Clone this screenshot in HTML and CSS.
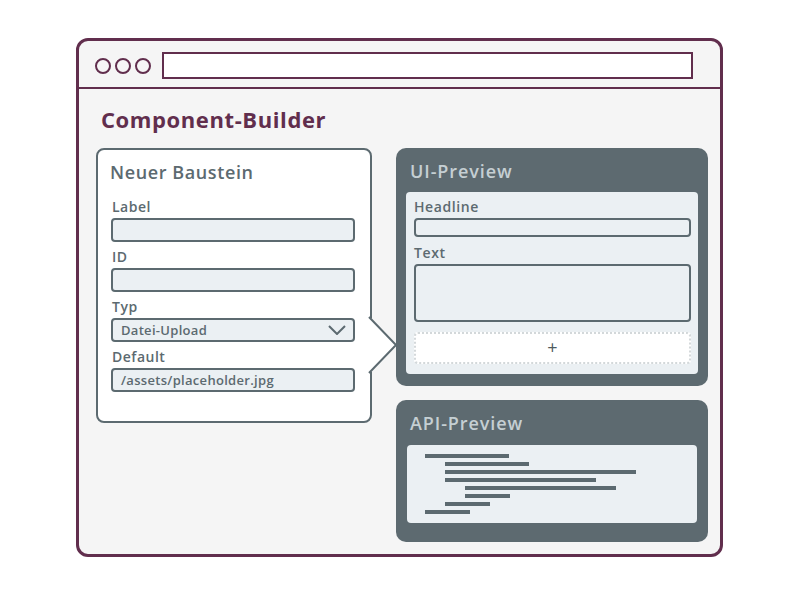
FILE: index.html
```html
<!DOCTYPE html>
<html lang="de">
<head>
  <meta charset="UTF-8" />
  <meta name="viewport" content="width=device-width, initial-scale=1.0" />
  <title>Component-Builder</title>
  <link rel="stylesheet" href="styles.css">
</head>
<body>
  <div class="window">
    <div class="topbar">
      <span class="dot"></span>
      <span class="dot"></span>
      <span class="dot"></span>
      <div class="urlbar"></div>
    </div>

    <div class="main">
      <h1 class="page-title">Component-Builder</h1>

      <div class="columns">
        <div class="card">
          <h2 class="card-title">Neuer Baustein</h2>

          <label class="field-label">Label</label>
          <div class="input"></div>

          <label class="field-label">ID</label>
          <div class="input"></div>

          <label class="field-label">Typ</label>
          <div class="input select">
            <span>Datei-Upload</span>
            <svg class="chevron" width="18" height="10" viewBox="0 0 18 10">
              <polyline points="1,1 9,9 17,1" fill="none" stroke="#5c6a70" stroke-width="2" />
            </svg>
          </div>

          <label class="field-label">Default</label>
          <div class="input"><span>/assets/placeholder.jpg</span></div>

          <svg class="pointer" width="30" height="58" viewBox="0 0 30 58">
            <polygon points="0,2 3,2 28,29 3,56 0,56" fill="#fff" />
            <polyline points="1,1 28,29 1,57" fill="none" stroke="#5c6a70" stroke-width="2" />
          </svg>
        </div>

        <div class="side">
          <div class="panel ui-panel">
            <h2 class="panel-title">UI-Preview</h2>
            <div class="panel-body">
              <div class="preview-label">Headline</div>
              <div class="preview-input"></div>
              <div class="preview-label">Text</div>
              <div class="preview-input textarea"></div>
              <div class="add-box">+</div>
            </div>
          </div>

          <div class="panel api-panel">
            <h2 class="panel-title">API-Preview</h2>
            <div class="panel-body code">
              <div class="code-line" style="width: 84px;"></div>
              <div class="code-line indent-1" style="width: 84px;"></div>
              <div class="code-line indent-1" style="width: 191px;"></div>
              <div class="code-line indent-1" style="width: 151px;"></div>
              <div class="code-line indent-2" style="width: 151px;"></div>
              <div class="code-line indent-2" style="width: 45px;"></div>
              <div class="code-line indent-1" style="width: 45px;"></div>
              <div class="code-line" style="width: 45px;"></div>
            </div>
          </div>
        </div>
      </div>
    </div>
  </div>
</body>
</html>
```

FILE: styles.css
```css
body {
  margin: 0;
  background: #fff;
  font-family: "Open Sans", "Noto Sans", sans-serif;
}

.window {
  box-sizing: border-box;
  width: 647px;
  height: 519px;
  margin: 38px 0 0 76px;
  border: 3px solid #612e4d;
  border-radius: 12px;
  background: #f5f5f5;
  overflow: hidden;
}

.topbar {
  display: flex;
  align-items: center;
  padding: 11px 27px 8px 16px;
  border-bottom: 2px solid #612e4d;
}

.dot {
  box-sizing: border-box;
  width: 16px;
  height: 16px;
  margin-right: 4px;
  border: 2px solid #612e4d;
  border-radius: 50%;
}

.urlbar {
  box-sizing: border-box;
  flex: 1;
  height: 27px;
  margin-left: 7px;
  border: 2px solid #612e4d;
  background: #fff;
}

.main {
  padding: 0 12px 0 17px;
}

.page-title {
  margin: 0;
  padding: 17px 0 0 5px;
  height: 42px;
  font-size: 22px;
  line-height: 26px;
  font-weight: 700;
  letter-spacing: 0.6px;
  color: #612e4d;
}

.columns {
  display: flex;
  gap: 24px;
}

.card {
  position: relative;
  box-sizing: border-box;
  width: 276px;
  height: 275px;
  padding: 10px 15px 0 13px;
  border: 2px solid #5c6a70;
  border-radius: 8px;
  background: #fff;
  color: #5c6a70;
}

.card-title {
  margin: 0 0 16px -1px;
  font-size: 18px;
  line-height: 24px;
  font-weight: 600;
  letter-spacing: 0.6px;
}

.field-label {
  display: block;
  padding: 0 0 4px 1px;
  font-size: 14px;
  line-height: 14px;
  font-weight: 600;
  letter-spacing: 0.5px;
}

.input {
  box-sizing: border-box;
  display: flex;
  align-items: center;
  justify-content: space-between;
  height: 24px;
  margin-bottom: 8px;
  padding: 0 8px;
  border: 2px solid #5c6a70;
  border-radius: 4px;
  background: #ebf0f3;
  font-size: 13px;
  font-weight: 600;
  letter-spacing: 0.3px;
}

.chevron {
  margin-right: -1px;
}

.pointer {
  position: absolute;
  top: 166px;
  right: -28px;
}

.side {
  flex: 1;
  display: flex;
  flex-direction: column;
  gap: 14px;
}

.panel {
  box-sizing: border-box;
  padding: 11px 10px 12px 10px;
  border-radius: 10px;
  background: #5d6a70;
}

.ui-panel {
  height: 238px;
}

.api-panel {
  height: 142px;
}

.panel-title {
  margin: 0 0 9px 4px;
  font-size: 18px;
  line-height: 24px;
  font-weight: 600;
  letter-spacing: 0.9px;
  color: #c5cfd3;
}

.panel-body {
  border-radius: 4px;
  background: #ebf0f3;
  color: #5c6a70;
}

.ui-panel .panel-body {
  padding: 8px 7px 10px 8px;
}

.preview-label {
  padding-bottom: 4px;
  font-size: 14px;
  line-height: 14px;
  font-weight: 600;
  letter-spacing: 0.6px;
}

.preview-input {
  box-sizing: border-box;
  height: 19px;
  margin-bottom: 9px;
  border: 2px solid #5c6a70;
  border-radius: 4px;
}

.preview-input.textarea {
  height: 58px;
  margin-bottom: 10px;
}

.add-box {
  box-sizing: border-box;
  height: 32px;
  border: 2px dotted #d3d8da;
  border-radius: 4px;
  background: #fff;
  text-align: center;
  font-size: 18px;
  line-height: 27px;
  font-weight: 400;
  color: #4f5b60;
}

.api-panel .panel-title {
  margin-bottom: 10px;
}

.code {
  display: flex;
  flex-direction: column;
  gap: 4px;
  padding: 9px 0 9px 18px;
  margin-right: 1px;
  margin-left: 1px;
}

.code-line {
  height: 4px;
  background: #5c6a70;
}

.indent-1 {
  margin-left: 20px;
}

.indent-2 {
  margin-left: 40px;
}
```
